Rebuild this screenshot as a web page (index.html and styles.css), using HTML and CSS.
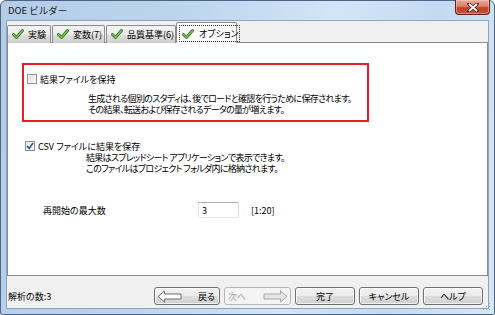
FILE: index.html
```html
<!DOCTYPE html>
<html lang="ja">
<head>
<meta charset="utf-8">
<title>DOE ビルダー</title>
<link rel="stylesheet" href="styles.css">
</head>
<body>
<div class="window">
  <div class="titlebar">
    <span class="title">DOE ビルダー</span>
    <div class="close">
      <svg width="12" height="9" viewBox="0 0 12 9"><path d="M2 1 L10 8 M10 1 L2 8" stroke="#5a1a10" stroke-width="3.2" stroke-linecap="square"/><path d="M2 1 L10 8 M10 1 L2 8" stroke="#fff" stroke-width="1.8"/></svg>
    </div>
  </div>
  <div class="client">
    <div class="tabs">
      <div class="tab t1"><svg class="ok" width="12" height="10" viewBox="0 0 12 10"><path d="M1.5 5.5 L4.5 8.5 L10.5 1.5" fill="none" stroke="#2c6e1e" stroke-width="2.8" stroke-linecap="round" stroke-linejoin="round"/><path d="M1.5 5.5 L4.5 8.5 L10.5 1.5" fill="none" stroke="#76c94e" stroke-width="1.3" stroke-linecap="round" stroke-linejoin="round"/></svg><span>実験</span></div>
      <div class="tab t2"><svg class="ok" width="12" height="10" viewBox="0 0 12 10"><path d="M1.5 5.5 L4.5 8.5 L10.5 1.5" fill="none" stroke="#2c6e1e" stroke-width="2.8" stroke-linecap="round" stroke-linejoin="round"/><path d="M1.5 5.5 L4.5 8.5 L10.5 1.5" fill="none" stroke="#76c94e" stroke-width="1.3" stroke-linecap="round" stroke-linejoin="round"/></svg><span>変数(7)</span></div>
      <div class="tab t3"><svg class="ok" width="12" height="10" viewBox="0 0 12 10"><path d="M1.5 5.5 L4.5 8.5 L10.5 1.5" fill="none" stroke="#2c6e1e" stroke-width="2.8" stroke-linecap="round" stroke-linejoin="round"/><path d="M1.5 5.5 L4.5 8.5 L10.5 1.5" fill="none" stroke="#76c94e" stroke-width="1.3" stroke-linecap="round" stroke-linejoin="round"/></svg><span>品質基準(6)</span></div>
      <div class="tab active"><div class="focus"><svg class="ok" width="12" height="10" viewBox="0 0 12 10"><path d="M1.5 5.5 L4.5 8.5 L10.5 1.5" fill="none" stroke="#2c6e1e" stroke-width="2.8" stroke-linecap="round" stroke-linejoin="round"/><path d="M1.5 5.5 L4.5 8.5 L10.5 1.5" fill="none" stroke="#76c94e" stroke-width="1.3" stroke-linecap="round" stroke-linejoin="round"/></svg><span>オプション</span></div></div>
    </div>
    <div class="panel">
      <div class="highlight">
        <div class="check"><span class="box"></span><span>結果ファイルを保持</span></div>
        <p class="desc first">生成される個別のスタディは、後でロードと確認を行うために保存されます。<br>その結果、転送および保存されるデータの量が増えます。</p>
      </div>
      <div class="group">
        <div class="check"><span class="box checked"><svg width="8" height="8" viewBox="0 0 8 8"><path d="M1 4 L3.2 6.5 L7 1" fill="none" stroke="#3d4f87" stroke-width="1.6"/></svg></span><span>CSV ファイルに結果を保存</span></div>
        <p class="desc">結果はスプレッドシート アプリケーションで表示できます。<br>このファイルはプロジェクト フォルダ内に格納されます。</p>
      </div>
      <div class="row">
        <span class="label">再開始の最大数</span>
        <span class="input">3</span>
        <span class="range">[1:20]</span>
      </div>
    </div>
    <div class="footer">
      <span class="status">解析の数:3</span>
      <div class="buttons">
        <div class="btn back">
          <svg width="25" height="13" viewBox="0 0 25 13"><path d="M1 6.5 L7.5 1 L7.5 4 L24 4 L24 9 L7.5 9 L7.5 12 Z" fill="#fff" stroke="#6e6e6e" stroke-width="1"/></svg>
          <span>戻る</span>
        </div>
        <div class="btn next disabled">
          <span>次へ</span>
          <svg width="25" height="13" viewBox="0 0 25 13"><path d="M24 6.5 L17.5 1 L17.5 4 L1 4 L1 9 L17.5 9 L17.5 12 Z" fill="#e6e6e6" stroke="#a8a8a8" stroke-width="1"/></svg>
        </div>
        <div class="btn std finish">完了</div>
        <div class="btn std">キャンセル</div>
        <div class="btn std">ヘルプ</div>
      </div>
    </div>
  </div>
  <svg class="grip" width="8" height="8" viewBox="0 0 8 8"><g fill="#9aa6b4"><rect x="6" y="0" width="1" height="1"/><rect x="3" y="3" width="1" height="1"/><rect x="6" y="3" width="1" height="1"/><rect x="0" y="6" width="1" height="1"/><rect x="3" y="6" width="1" height="1"/><rect x="6" y="6" width="1" height="1"/></g></svg>
</div>
</body>
</html>
```

FILE: styles.css
```css
* { box-sizing: border-box; margin: 0; padding: 0; }
html, body { width: 495px; height: 315px; overflow: hidden; background: #fff; }
body {
  font-family: "Noto Sans CJK JP", "Noto Sans", sans-serif;
  font-size: 9px;
  line-height: 11px;
  color: #000;
  font-feature-settings: "palt";
}
.window {
  position: relative;
  width: 495px;
  height: 315px;
  border: 1px solid #4d6582;
  border-radius: 6px 6px 2px 2px;
  background: linear-gradient(100deg, #b3cce8 0%, #bdd5ee 35%, #d2e5f8 62%, #c4daf1 80%, #d6e7f8 100%);
  padding: 0 5px 5px 5px;
  display: flex;
  flex-direction: column;
}
.titlebar {
  height: 19px;
  display: flex;
  justify-content: space-between;
  align-items: flex-start;
}
.title {
  margin: 4px 0 0 2px;
  font-size: 9.5px;
  line-height: 11px;
  color: #1a1a1a;
  font-feature-settings: normal;
}
.close {
  width: 35px;
  height: 15px;
  margin: -1px -1px 0 0;
  border: 1px solid #5e2418;
  border-top: none;
  border-radius: 0 0 4px 4px;
  background: linear-gradient(#e9a999 0%, #d9806b 45%, #c2412a 55%, #c75034 100%);
  box-shadow: inset 0 0 0 1px rgba(255,220,210,0.45);
  display: flex;
  align-items: center;
  justify-content: center;
}
.client {
  flex: 1;
  border: 1px solid #8ea3bd;
  background: #f0f0f0;
  display: flex;
  flex-direction: column;
}
.tabs {
  height: 22px;
  display: flex;
  align-items: flex-end;
  border-bottom: 1px solid #898c95;
}
.tab {
  height: 18px;
  margin-bottom: -1px;
  margin-right: 1px;
  border: 1px solid #898c95;
  border-bottom: none;
  border-radius: 2px 2px 0 0;
  background: linear-gradient(#f3f3f3 0%, #ebebeb 50%, #dddddd 51%, #cfcfcf 100%);
  display: flex;
  align-items: center;
  gap: 4px;
  padding: 0 0 1px 4px;
  white-space: nowrap;
}
.ok { flex: none; }
.t1 { width: 44px; }
.t2 { width: 53px; }
.t3 { width: 70px; }
.tab.active {
  width: 61px;
  height: 21px;
  margin-left: -1px;
  background: #fff;
  border-bottom: 1px solid #fff;
  padding: 2px 2px 0 2px;
  align-items: stretch;
}
.focus {
  flex: 1;
  border: 1px dotted #333;
  display: flex;
  align-items: center;
  gap: 5px;
  padding: 0 0 0 2px;
}
.panel {
  height: 233px;
  background: #fff;
  border: 1px solid #898c95;
  border-top: none;
  padding: 20px 0 0 14px;
}
.highlight {
  width: 347px;
  height: 59px;
  border: 2px solid #ec1c24;
  padding: 9px 0 0 3px;
}
.check {
  display: flex;
  align-items: center;
  gap: 3px;
  height: 10px;
}
.box {
  width: 10px;
  height: 10px;
  border: 1px solid #8e8f8f;
  background: linear-gradient(135deg, #d8d8d8 0%, #f2f2f2 60%, #ffffff 100%);
  box-shadow: inset 0 0 0 1px #f4f4f4;
  display: flex;
  align-items: center;
  justify-content: center;
  flex: none;
}
.box.checked { background: linear-gradient(135deg, #dfe4ee, #ffffff); }
.desc {
  margin-left: 61px;
  line-height: 11px;
  letter-spacing: -0.7px;
  white-space: nowrap;
}
.desc.first { margin-top: 9px; }
.group {
  margin: 19px 0 0 3px;
}
.group .desc { margin-top: 1px; }
.row {
  margin: 28px 0 0 21px;
  display: flex;
  align-items: center;
}
.label { width: 155px; }
.input {
  width: 41px;
  height: 16px;
  border: 1px solid #abadb3;
  border-left-color: #e2e3ea;
  border-right-color: #dbdfe6;
  border-bottom-color: #e3e9ef;
  padding: 2px 0 0 3px;
  background: #fff;
}
.range { margin-left: 12px; }
.footer {
  flex: 1;
  display: flex;
  align-items: center;
  justify-content: space-between;
  padding: 8px 5px 0 1px;
}
.buttons {
  display: flex;
  gap: 4px;
}
.btn {
  height: 18px;
  border: 1px solid #707070;
  border-radius: 3px;
  background: linear-gradient(#f2f2f2 0%, #ebebeb 50%, #dddddd 51%, #cfcfcf 100%);
  box-shadow: inset 0 0 0 1px rgba(255,255,255,0.7);
  display: flex;
  align-items: center;
  justify-content: center;
  white-space: nowrap;
}
.back {
  width: 66px;
  justify-content: space-between;
  padding: 0 4px 0 2px;
}
.next {
  width: 67px;
  justify-content: space-between;
  padding: 0 2px 0 3px;
}
.btn.disabled {
  border-color: #b5b8bb;
  background: #f4f4f4;
  box-shadow: none;
  color: #a3a3a3;
}
.std { width: 60px; }
.grip { position: absolute; right: 3px; bottom: 3px; }
```
